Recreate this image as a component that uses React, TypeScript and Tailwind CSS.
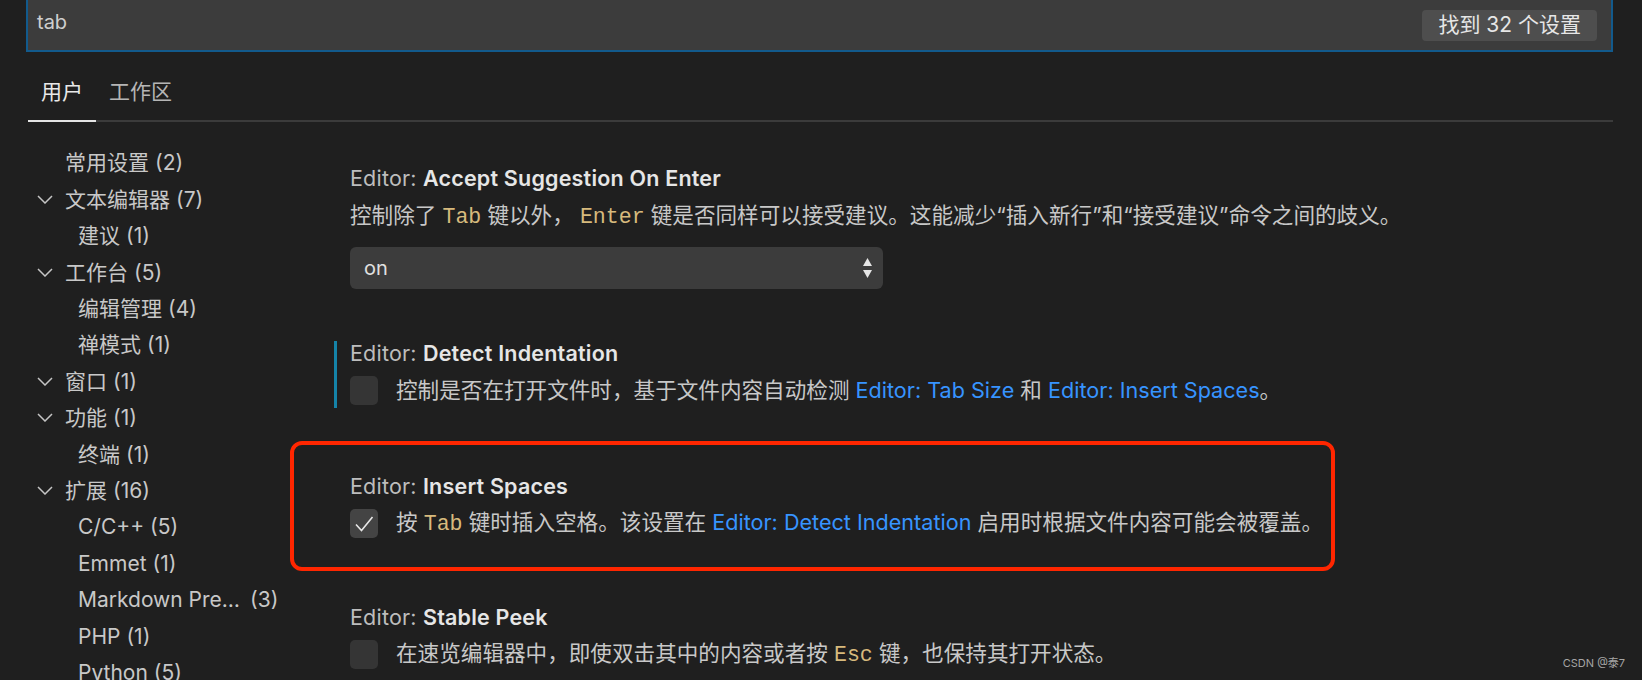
import React from 'react';

type NavItem = { label: string; count: number; child?: boolean; open?: boolean };

const nav: NavItem[] = [
  { label: '常用设置', count: 2 },
  { label: '文本编辑器', count: 7, open: true },
  { label: '建议', count: 1, child: true },
  { label: '工作台', count: 5, open: true },
  { label: '编辑管理', count: 4, child: true },
  { label: '禅模式', count: 1, child: true },
  { label: '窗口', count: 1, open: true },
  { label: '功能', count: 1, open: true },
  { label: '终端', count: 1, child: true },
  { label: '扩展', count: 16, open: true },
  { label: 'C/C++', count: 5, child: true },
  { label: 'Emmet', count: 1, child: true },
  { label: 'Markdown Pre…', count: 3, child: true },
  { label: 'PHP', count: 1, child: true },
  { label: 'Python', count: 5, child: true },
];

function Chevron() {
  return (
    <svg width="16" height="9" viewBox="0 0 16 9" fill="none">
      <polyline points="1,1 8,8 15,1" stroke="#c5c5c5" strokeWidth="1.5" />
    </svg>
  );
}

function Code({ children }: { children: React.ReactNode }) {
  return <span className="font-['Liberation_Mono',monospace] text-[#d7ba7d]">{children}</span>;
}

function Link({ children }: { children: React.ReactNode }) {
  return <span className="text-[#3794ff]">{children}</span>;
}

function Checkbox({ checked }: { checked?: boolean }) {
  return (
    <div
      className={
        'w-[28px] h-[29px] rounded-[5px] shrink-0 flex items-center justify-center ' +
        (checked ? 'bg-[#444444]' : 'bg-[#353535]')
      }
    >
      {checked && (
        <svg width="20" height="18" viewBox="0 0 20 18" fill="none">
          <polyline points="2,9.5 7.5,15.5 18.5,2" stroke="#e8e8e8" strokeWidth="1.6" />
        </svg>
      )}
    </div>
  );
}

function Title({ name }: { name: string }) {
  return (
    <div className="h-[24px] leading-[24px] text-[21.5px] tracking-[0.2px] whitespace-nowrap">
      <span className="text-[#bdbdbd]">Editor: </span>
      <span className="font-semibold text-[#e6e6e6]">{name}</span>
    </div>
  );
}

function Section({
  focused,
  children,
  className = '',
}: {
  focused?: boolean;
  children: React.ReactNode;
  className?: string;
}) {
  return (
    <div className={'relative flex gap-[13px] ' + className}>
      <div className={'w-[3px] shrink-0 ' + (focused ? 'bg-[#1583a8]' : '')} />
      <div className="flex flex-col">{children}</div>
    </div>
  );
}

export default function App() {
  return (
    <div className="relative w-[1642px] h-[680px] overflow-hidden bg-[#1f1f1f] font-['Inter','Noto_Sans_CJK_SC',sans-serif] text-[#c8c8c8]">
      {/* search */}
      <div className="ml-[26px] w-[1587px] h-[52px] bg-[#3c3c3c] border-x-2 border-b-2 border-[#125a8c] flex items-center justify-between pl-[9px] pr-[14px]">
        <span className="text-[20px] text-[#cfcfcf] -mt-[6px]">tab</span>
        <span className="h-[31px] px-[16px] flex items-center rounded-[4px] bg-[#4e4e4e] text-[21px] text-[#e6e6e6]">
          找到 32 个设置
        </span>
      </div>

      {/* tabs */}
      <div className="mt-[12px] ml-[28px] w-[1585px] h-[58px] flex border-b-2 border-[#3b3b3b]">
        <div className="px-[13px] -mb-[2px] border-b-2 border-[#e4e4e4] flex items-center text-[21px] text-[#e8e8e8]">
          用户
        </div>
        <div className="px-[13px] flex items-center text-[21px] text-[#b5b5b5]">工作区</div>
      </div>

      <div className="flex">
        {/* sidebar */}
        <div className="w-[290px] shrink-0 pt-[23px]">
          {nav.map((n) => (
            <div key={n.label} className="h-[36.4px] pl-[37px] flex items-center text-[21px] whitespace-nowrap">
              <div className="w-[16px] mr-[12px] flex items-center justify-center">{n.open && <Chevron />}</div>
              <span className={n.child ? 'ml-[13px]' : ''}>
                {n.label}
                <span className={n.label.endsWith('…') ? 'ml-[10px]' : 'ml-[6px]'}>({n.count})</span>
              </span>
            </div>
          ))}
        </div>

        {/* settings list */}
        <div className="flex-1 pl-[44px] pt-[44px] text-[21.6px]">
          <Section>
            <Title name="Accept Suggestion On Enter" />
            <div className="mt-[11px] h-[29px] leading-[29px] whitespace-nowrap">
              <span>
                控制除了 <Code>Tab</Code> 键以外，&nbsp;<Code>Enter</Code> 键是否同样可以接受建议。这能减少“插入新行”和“接受建议”命令之间的歧义。
              </span>
            </div>
            <div className="mt-[17px] w-[533px] h-[42px] rounded-[6px] bg-[#3c3c3c] flex items-center justify-between pl-[14px] pr-[11px]">
              <span className="text-[#e0e0e0] text-[20px]">on</span>
              <svg width="9" height="20" viewBox="0 0 9 20" fill="#e6e6e6">
                <polygon points="4.5,0 9,8 0,8" />
                <polygon points="0,12 9,12 4.5,20" />
              </svg>
            </div>
          </Section>

          <Section focused className="mt-[52px]">
            <Title name="Detect Indentation" />
            <div className="mt-[11px] h-[29px] leading-[29px] flex items-center gap-[18px] whitespace-nowrap box-content pb-[3px]">
              <Checkbox />
              <span>
                控制是否在打开文件时，基于文件内容自动检测 <Link>Editor: Tab Size</Link> 和{' '}
                <Link>Editor: Insert Spaces</Link>。
              </span>
            </div>
          </Section>

          <Section className="mt-[66px]">
            <Title name="Insert Spaces" />
            <div className="mt-[11px] h-[29px] leading-[29px] flex items-center gap-[18px] whitespace-nowrap box-content pb-[3px]">
              <Checkbox checked />
              <span>
                按 <Code>Tab</Code> 键时插入空格。该设置在 <Link>Editor: Detect Indentation</Link>{' '}
                启用时根据文件内容可能会被覆盖。
              </span>
            </div>
            <div className="pointer-events-none absolute left-[-44px] top-[-33px] w-[1045px] h-[130px] rounded-[12px] border-4 border-[#ff2600]" />
          </Section>

          <Section className="mt-[64px]">
            <Title name="Stable Peek" />
            <div className="mt-[11px] h-[29px] leading-[29px] flex items-center gap-[18px] whitespace-nowrap">
              <Checkbox />
              <span>
                在速览编辑器中，即使双击其中的内容或者按 <Code>Esc</Code> 键，也保持其打开状态。
              </span>
            </div>
          </Section>
        </div>
      </div>

      <div className="absolute right-[17px] bottom-[9px] text-[11px] text-[#a5a5a5]">CSDN @泰7</div>
    </div>
  );
}
